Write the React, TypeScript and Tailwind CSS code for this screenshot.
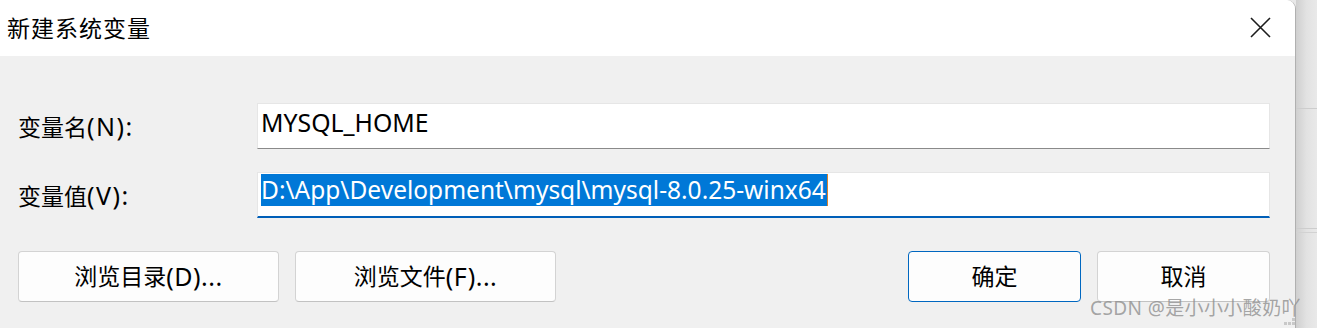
import React from 'react';

const font = "font-['Noto_Sans','Noto_Sans_CJK_SC',sans-serif]";

function TextBox({ children, focused }: { children: React.ReactNode; focused?: boolean }) {
  return (
    <div
      className={
        'flex-1 h-[46px] bg-white border border-[#e6e6e6] flex items-start pl-[3px] pt-[1px] ' +
        (focused ? 'border-b-2 border-b-[#005fb8]' : 'border-b border-b-[#8a8a8a]')
      }
    >
      {children}
    </div>
  );
}

function DialogButton({
  label,
  suffix,
  primary,
  width,
}: {
  label: string;
  suffix?: string;
  primary?: boolean;
  width: string;
}) {
  return (
    <button
      className={
        'h-[51px] rounded-[4px] bg-[#fdfdfd] text-[23px] text-black flex items-center justify-center ' +
        width +
        ' ' +
        (primary ? 'border border-[#0067c0]' : 'border border-[#d3d3d3] border-b-[#c2c2c2]')
      }
    >
      {label}
      {suffix && <span className="text-[25px] tracking-[0.5px]">{suffix}</span>}
    </button>
  );
}

function Label({ cjk, latin }: { cjk: string; latin: string }) {
  return (
    <span className="w-[239px] text-[23px] text-black pt-[2px]">
      {cjk}
      <span className="text-[25px] tracking-[1.5px]">{latin}</span>
    </span>
  );
}

export default function App() {
  return (
    <div className={'relative w-[1317px] h-[328px] flex overflow-hidden bg-[#e8e8e8] ' + font}>
      {/* dialog */}
      <div className="w-[1296px] h-full flex flex-col rounded-tr-[9px] overflow-hidden border-r border-[#b0b0b0]">
        <div className="h-[56px] bg-white flex items-center justify-between pl-[7px] pr-[24px]">
          <span className="text-[23px] text-black leading-none tracking-[1px]">新建系统变量</span>
          <svg width="21" height="21" viewBox="0 0 21 21" className="mt-[-2px]">
            <path d="M1 1 L20 20 M20 1 L1 20" stroke="#1c1c1c" strokeWidth="1.6" />
          </svg>
        </div>

        <div className="flex-1 bg-[#f0f0f0] pl-[18px] pr-[25px] pt-[47px] flex flex-col">
          <div className="flex items-center">
            <Label cjk="变量名" latin="(N):" />
            <TextBox>
              <span className="text-[24.8px] leading-[34px] text-black">MYSQL_HOME</span>
            </TextBox>
          </div>

          <div className="flex items-center mt-[23px]">
            <Label cjk="变量值" latin="(V):" />
            <TextBox focused>
              <span className="text-[24.5px] leading-[32px] text-white bg-[#0078d7] border-r border-[#d9822b] pr-[1px]">
                D:\App\Development\mysql\mysql-8.0.25-winx64
              </span>
            </TextBox>
          </div>

          <div className="flex items-center mt-[33px]">
            <DialogButton label="浏览目录" suffix="(D)..." width="w-[261px]" />
            <DialogButton label="浏览文件" suffix="(F)..." width="w-[261px] ml-[16px]" />
            <div className="flex-1" />
            <DialogButton label="确定" primary width="w-[173px]" />
            <DialogButton label="取消" width="w-[173px] ml-[16px]" />
          </div>
        </div>
      </div>

      {/* window behind */}
      <div className="flex-1 h-full flex flex-col bg-gradient-to-r from-[#cfcfcf] via-[#e2e2e2] to-[#e9e9e9]">
        <div className="h-[108px]" />
        <div className="h-px bg-[#cdcdcd]" />
        <div className="h-[119px]" />
        <div className="h-px bg-[#cdcdcd]" />
        <div className="h-[3px]" />
        <div className="h-px bg-[#d2d2d2]" />
        <div className="flex-1" />
      </div>

      {/* watermark */}
      <span className="absolute left-[1090px] top-[296px] text-[19px] leading-[24px] text-[#8f8f8f]/80 tracking-[0.4px]">
        CSDN @是小小小酸奶吖
      </span>
      <div className="absolute left-[1284px] top-[318px] grid grid-cols-3 gap-[1px]">
        <span className="w-[3px] h-[3px] bg-transparent" />
        <span className="w-[3px] h-[3px] bg-transparent" />
        <span className="w-[3px] h-[3px] bg-[#c8c8c8]" />
        <span className="w-[3px] h-[3px] bg-[#c8c8c8]" />
        <span className="w-[3px] h-[3px] bg-[#c8c8c8]" />
        <span className="w-[3px] h-[3px] bg-[#c8c8c8]" />
      </div>
    </div>
  );
}
